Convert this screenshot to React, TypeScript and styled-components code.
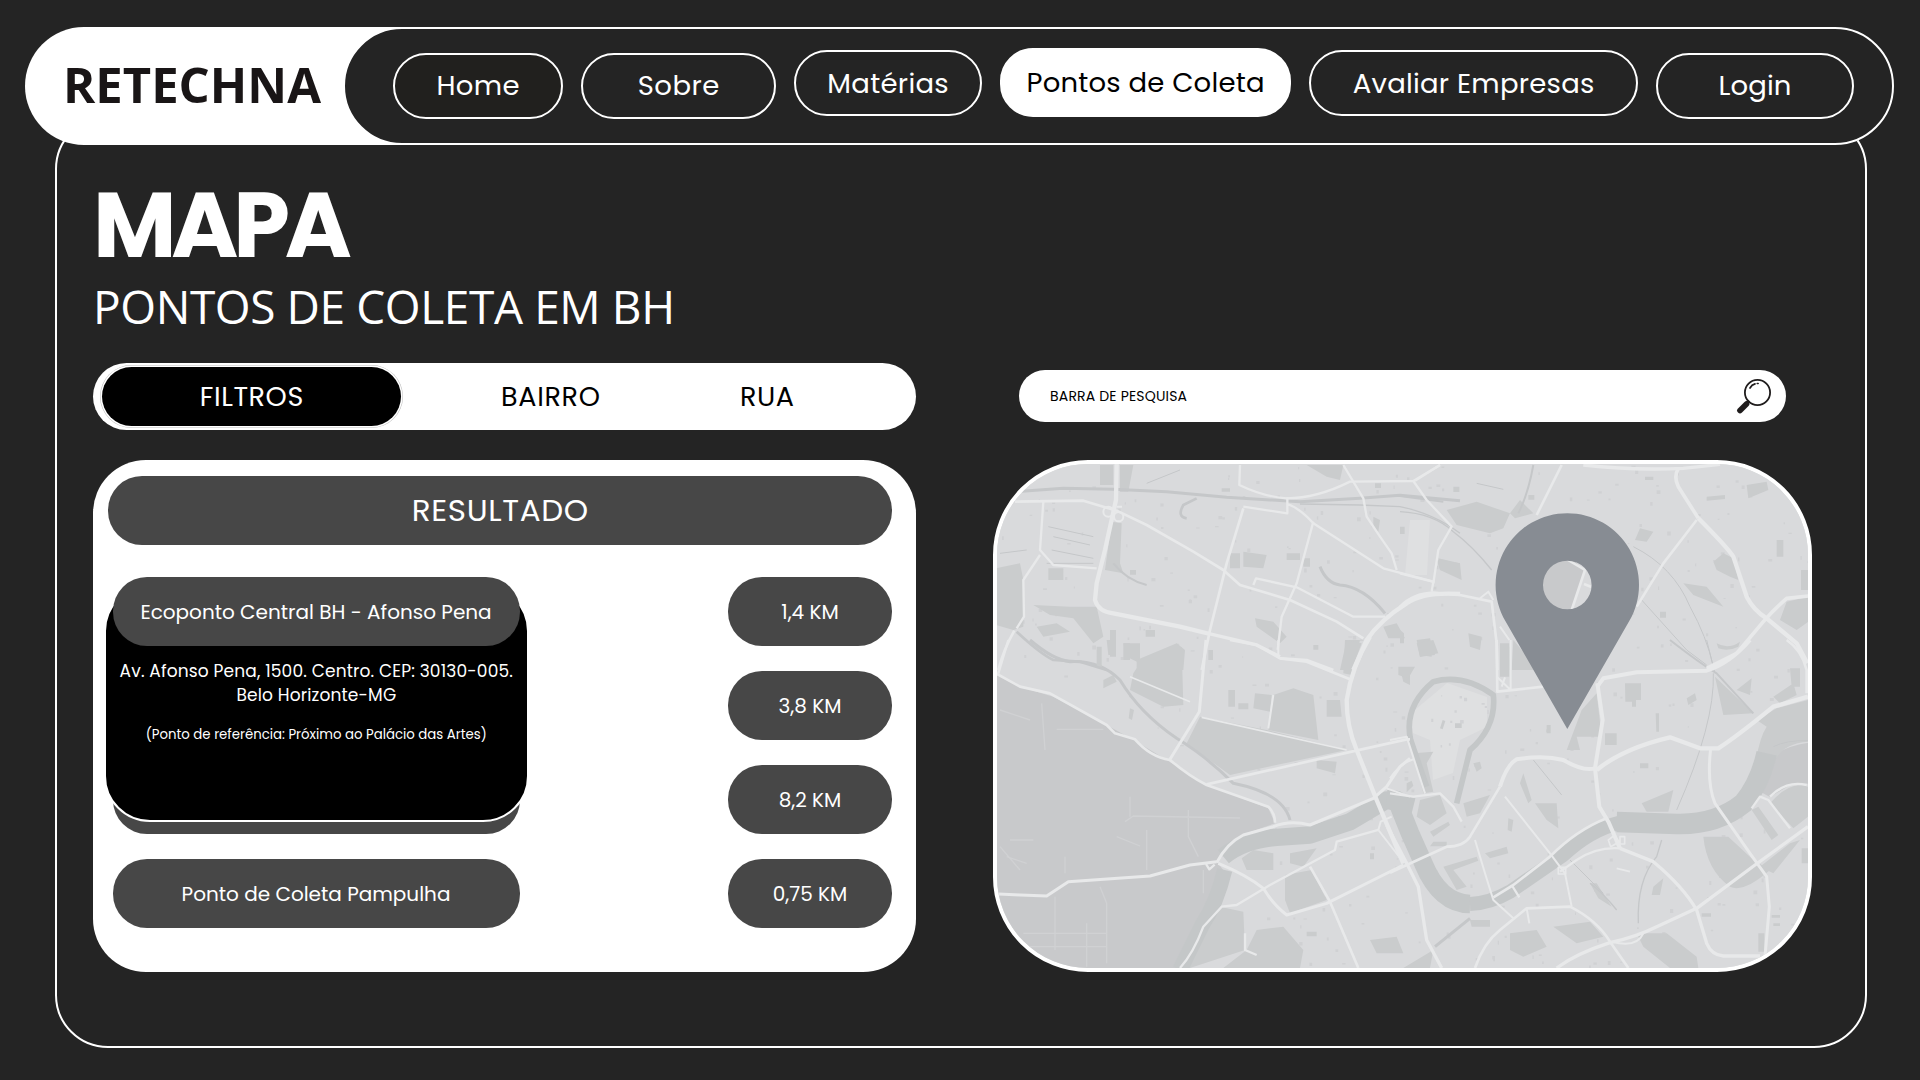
import React from "react";
import styled, { createGlobalStyle, css } from "styled-components";

const GlobalStyle = createGlobalStyle`
  * { box-sizing: border-box; }
  body {
    margin: 0;
    background: #242424;
    color: #fff;
    font-family: Poppins, Inter, "Noto Sans", sans-serif;
    font-feature-settings: "cv11";
  }
`;

const Page = styled.div`
  width: 1920px;
  height: 1080px;
  padding: 27px 26px 0 25px;
  overflow: hidden;
  background: #242424;
`;

const Text = styled.span<{ $size: number; $track?: number }>`
  font-size: ${(p) => p.$size}px;
  letter-spacing: ${(p) => p.$track ?? 0}px;
  margin-right: ${(p) => -(p.$track ?? 0)}px;
  white-space: nowrap;
`;

const Header = styled.header`
  position: relative;
  z-index: 1;
  display: flex;
  height: 117.5px;
  border-radius: 59px;
  background: linear-gradient(90deg, #fff 600px, #242424 600px);
`;

const Brand = styled.div`
  width: 317.5px;
  padding: 0 0 3px 38px;
  display: flex;
  align-items: center;
  color: #191516;
  font-family: "Open Sans", sans-serif;
  font-weight: 700;
`;

const Nav = styled.nav`
  flex: 1;
  display: flex;
  align-items: flex-start;
  gap: 18px;
  padding: 24px 0 0 48.5px;
  border: 2px solid #fff;
  border-radius: 59px;
  background: #242424;
`;

const NavButton = styled.button<{ $width: number; $raise?: number; $active?: boolean; $tint?: string }>`
  width: ${(p) => p.$width}px;
  height: 66px;
  margin: ${(p) => -(p.$raise ?? 0)}px 0 0;
  padding: ${(p) => (p.$raise ? 1.5 : 0)}px 0 0;
  display: flex;
  align-items: center;
  justify-content: center;
  border: 2px solid #fff;
  border-radius: 33px;
  background: ${(p) => p.$tint ?? "transparent"};
  color: #fff;
  font-family: inherit;
  font-feature-settings: inherit;
  ${(p) => p.$active && css`
    height: 68.5px;
    background: #fff;
    color: #000;
  `}
`;

const Frame = styled.main`
  width: 1812px;
  height: 932px;
  margin: -28.5px 0 0 30px;
  padding: 62px 0 0 36px;
  border: 2px solid #fff;
  border-radius: 53px;
`;

const Title = styled.h1`
  margin: 0 0 6px 0;
  line-height: 90px;
  font-weight: 700;
  display: flex;
`;

const Subtitle = styled.h2`
  margin: 0 0 27px 0;
  line-height: 60px;
  font-family: "Open Sans", sans-serif;
  font-weight: 400;
  display: flex;
`;

const Columns = styled.div`
  display: grid;
  grid-template-columns: 823px 819px;
  grid-template-rows: 67px 512px;
  gap: 30px 77px;
`;

const FilterBar = styled.div`
  display: flex;
  align-items: center;
  padding-left: 9px;
  border-radius: 34px;
  background: #fff;
  color: #000;
`;

const FilterActive = styled.div`
  width: 299px;
  height: 59px;
  padding-top: 1px;
  display: flex;
  align-items: center;
  justify-content: center;
  border-radius: 30px;
  background: #000;
  color: #fff;
  box-shadow: 0 0 0 1.5px #fff, 0 0 0 2px #bbb;
`;

const FilterOption = styled.div<{ $gap: number }>`
  margin-left: ${(p) => p.$gap}px;
  padding-top: 1px;
  display: flex;
`;

const SearchBar = styled.div`
  width: 767px;
  height: 52px;
  margin: 7px 0 0 26px;
  padding: 0 15px 0 31px;
  display: flex;
  align-items: center;
  justify-content: space-between;
  border-radius: 26px;
  background: #fff;
  color: #000;
`;

const Card = styled.section`
  padding: 16px 24px 0 15px;
  border-radius: 53px;
  background: #fff;
`;

const CardHeader = styled.div`
  height: 69.3px;
  display: flex;
  align-items: center;
  justify-content: center;
  border-radius: 34px;
  background: #474747;
`;

const Results = styled.div`
  position: relative;
  margin: 31.7px 0 0 4.5px;
  display: flex;
  flex-direction: column;
  gap: 24.7px;
`;

const Row = styled.div`
  display: flex;
  justify-content: space-between;
`;

const Pill = styled.div<{ $width: number; $front?: boolean }>`
  position: relative;
  z-index: ${(p) => (p.$front ? 2 : 0)};
  width: ${(p) => p.$width}px;
  height: 69.3px;
  display: flex;
  align-items: center;
  justify-content: center;
  border-radius: 34px;
  background: #474747;
`;

const Details = styled.div`
  position: absolute;
  z-index: 1;
  left: -8.5px;
  top: 8px;
  width: 424.5px;
  height: 237px;
  padding-top: 72px;
  display: flex;
  flex-direction: column;
  align-items: center;
  line-height: 24px;
  border: 2px solid #fff;
  border-radius: 46px;
  background: #000;
`;

const Reference = styled.div`
  margin-top: 16px;
  display: flex;
`;

const MapCard = styled.section`
  border: 4px solid #fff;
  border-radius: 95px;
  overflow: hidden;
  background: #d9dadc;
  svg { display: block; }
`;

type Line = [width: number, d: string];

interface Tile {
  transform: string;
  water: Line[];
  areas: string;
  tracks: Line[];
  roads: Line[];
}

const WATER = "#c4c7c8";
const PARK = "#c8c9cb";
const BLOCK = "#cacccd";
const ROAD = "#e8e9ea";

const tiles: Tile[] = [
  {
    transform: "translate(990 640) scale(.33333)",
    water: [
      [46, "M704,690 Q680,790 636,856 L570,990"],
      [52, "M700,650 Q760,600 860,592 L960,585 1080,545 1190,480 1270,500"],
    ],
    areas:
      "M440,85 L575,20 580,195 520,200 420,150 430,100Z M630,230 L830,270 1070,330 720,405 590,310Z M850,165 L910,145 970,165 985,300 835,270Z M1065,0 L1110,0 1085,105 1060,100Z M795,160 L845,165 840,215 790,205Z M980,360 L1040,365 1035,400 980,385Z M1010,180h40l5,50h-45z M715,150h20v50h-20z M745,190h30v18h-30z M885,705 L965,690 1010,780 900,820 885,780Z M690,800 L760,815 765,930 600,984 570,984Z M800,870 L880,860 940,930 930,984 700,984 770,930Z M755,655 L790,630 850,640 850,690 770,690Z M900,640 L980,625 940,680 900,670Z M1140,900 L1220,890 1240,940 1160,940Z M1230,85h30v50l-20,-10z M340,120l30,-15 10,20 -40,20z M420,205l12,5 -6,30 -10,-5z M350,0h25v45h-20z M400,10h50v60l-40,-20z M1140,640h12v18h-12z M950,875h30v14h-30z",
    tracks: [[9, "M120,0 Q190,60 240,65 Q330,60 390,120 Q450,220 560,295 Q650,350 730,430 Q880,460 900,540"]],
    roads: [
      [7, "M55,0 L25,100"],
      [8, "M18,100 L90,140 180,160 350,255 375,280 435,298 Q480,350 540,360 Q600,410 650,435 L835,500 Q855,520 855,548"],
      [9, "M648,0 L628,215 540,358"],
      [8, "M650,433 L1085,335 1250,298 1260,298"],
      [5, "M635,232 L1070,330 M420,110 L600,185"],
      [8, "M720,0 L800,15 870,55 950,65 1080,118"],
      [6, "M865,0 V45 M850,165 L835,265"],
      [13, "M1140,-10 Q1085,80 1070,180 Q1070,260 1100,330 L1160,480 1240,670"],
      [9, "M25,762 L170,768 235,725 480,708 600,675 680,665"],
      [9, "M680,668 Q710,610 760,585 L850,560 Q900,540 960,555 L1150,475 1190,440 1230,380 1260,355"],
      [9, "M685,670 Q770,705 820,745 Q850,795 890,825 L1010,790 1240,675"],
      [7, "M570,984 Q610,940 640,860 L695,800 740,795 840,735 1035,630 1040,605 1165,570"],
      [6, "M1165,570 L1172,545 1205,530 M1165,570 L1235,660 M1190,445 L1260,470"],
      [8, "M960,680 L1020,785 1105,984"],
      [7, "M648,672 l10,16 l16,-14 M765,880 V930 L800,945"],
    ],
  },
  {
    transform: "translate(1390 640) scale(.33333)",
    water: [
      [56, "M-10,478 L20,480 60,580 100,670 Q150,790 240,792"],
      [42, "M240,792 Q300,790 360,755 L520,645 Q600,570 690,548"],
      [62, "M680,546 L860,552 Q980,555 1060,490 Q1110,430 1130,340"],
      [17, "M110,440 L62,300 Q40,200 130,125 Q220,100 310,165 Q320,260 240,330 L200,490"],
    ],
    areas:
      "M1098,360 Q1110,290 1130,260 L1100,240 1160,205 1254,180 V305 Q1160,310 1140,400 L1110,430Z M70,340 L130,335 110,370 130,455 100,460Z M150,265l8,-25 8,3 -8,25z M195,250h20v14h-20z M90,480 L150,465 170,520 120,555 80,530Z M220,490 L300,465 270,520 230,530Z M120,575 L175,545 180,555 130,590Z M130,605h40v14h-50z M160,680 L260,650 265,662 190,690 230,740 200,750Z M285,640 L350,620 355,640 300,655Z M435,490 L500,490 505,565 470,540Z M400,400 L425,480 415,490 390,430Z M575,210 L620,160 635,290 560,290 570,330 530,330Z M705,130h48v50h-15v20h-12v-15h-20z M890,175l25,-15 5,20 -25,15z M797,220h10v55h-8z M645,280h35v35h-35z M755,490 L850,450 835,515 770,515Z M750,370h25v15h-25z M975,110 L1090,220 1000,225Z M1040,150 L1085,115 1080,165Z M1150,170 L1210,130 1220,165 1170,190Z M1200,85h30v55h-25z M940,590 L1015,590 1090,660 1140,690 Q1060,760 1020,740 Q950,690 940,590Z M1110,680 L1200,610 1230,600 1150,700Z M1085,510 L1105,500 1165,585 1145,600Z M1140,490 Q1200,420 1254,440 V530 L1210,565Z M360,880 L440,870 470,920 400,950 360,930Z M490,860 L600,845 640,890 560,910Z M740,880 L830,880 920,950 925,984 840,984 760,920Z M40,984 L130,930 120,984Z M240,840h60v20h-55z M790,740 L820,715 810,765 785,765Z M330,20h28v90h-28z M85,10l40,5 v35l-35,-5z M25,80h50l-20,35 -30,-10z M355,535l15,5 -5,35 -12,-5z M250,370l20,-5 5,20 -15,10z M935,820h28v10h-28z M1105,880h18v55h-18z M1145,825h25v8h-25z M1150,850h20v8h-20z M1235,625h20v45h-20z M470,255h12v25h-12z M600,730h20l45,70 -40,-25z M50,430l15,-8 5,15 -20,20z",
    tracks: [
      [9, "M135,920 L240,835"],
      [6, "M840,0 Q930,70 980,100 L1090,220"],
      [4, "M600,730 Q640,760 680,810 M815,600 L800,650 Q740,720 745,850"],
      [3, "M970,100 Q975,250 860,510 M430,360 L515,465 M950,0 L975,100 M540,660 L640,760 M1150,320 Q1190,300 1254,302"],
    ],
    roads: [
      [12, "M1080,0 Q1020,70 950,92 L740,97 640,115 622,140"],
      [12, "M622,130 L638,240 615,385 628,500 655,545 690,625"],
      [6, "M0,300 L50,290 105,460 M0,415 Q30,370 70,358"],
      [8, "M320,0 L322,155 460,140"],
      [6, "M362,0 V150 L322,112 M345,112 L335,140"],
      [12, "M615,385 Q580,395 520,360 Q460,345 380,358 Q350,375 330,440"],
      [8, "M330,440 L240,590 Q220,620 170,620 L50,675 0,698"],
      [13, "M620,390 Q700,325 840,292 L930,325 985,325 Q1040,290 1150,200 L1254,170"],
      [9, "M962,325 Q950,430 975,490 L1080,640 1130,710 1138,800 1125,950"],
      [7, "M0,460 L70,470 150,460 190,500 215,545"],
      [10, "M-10,555 L50,670 85,740 110,900 155,984"],
      [6, "M345,470 L480,640 525,700 545,800"],
      [8, "M650,535 Q560,570 480,650 L370,735 310,772"],
      [7, "M690,625 Q620,620 560,660 L510,695 M365,735 L388,772"],
      [10, "M690,625 L790,665 Q880,740 920,810 L950,910 Q965,945 1000,948 L1110,948"],
      [10, "M500,984 Q560,940 660,908 Q740,890 800,860 L920,805 1095,675 1254,560"],
      [8, "M255,984 Q280,910 330,870 L410,805 540,800 Q620,840 660,905 L715,984"],
      [6, "M255,600 L285,700 310,780 370,835 M410,805 L418,850"],
      [8, "M1190,0 Q1235,30 1250,90 V160"],
      [5, "M655,600 l18,-14 14,20 -25,14z M690,590 h14 v22 h-14z M505,682h22v20h-22z M680,685l40,10"],
      [7, "M1085,505 L1110,470 1135,480 1200,565 M1140,470 Q1190,420 1250,435"],
      [6, "M665,905 Q740,925 760,880"],
    ],
  },
  {
    transform: "translate(980 350) scale(.33333)",
    water: [],
    areas:
      "M48,655 L120,640 130,690 130,830 100,840 48,825Z M160,765 L270,770 350,770 370,860 340,880 280,805 210,795Z M170,830 L230,820 270,845 190,860Z M395,515 L425,520 420,640 430,670 375,660Z M205,655h45v35h-45z M980,345 L1090,345 1080,390 1040,380Z M750,610h30v45h-30z M790,605 L860,615 850,655 790,650Z M825,805 L880,815 920,860 900,880 830,830Z M1100,870 L1145,880 1115,960 1080,960Z M1210,830 L1250,820 1275,865 1225,865Z M1310,870 L1350,865 1365,915 1320,920Z M470,930 L590,880 615,900 610,960 470,960Z M360,345h40v60h-40z M420,345h40l-15,80h-25z M1375,625 L1440,640 V670 L1380,660Z M497,840h28v20h-28z M1180,500l20,10 -5,35 -15,-10z M1260,530h14v22h-14z M920,610h40v20h-40z M970,625h20v25h-20z M1185,400h18v14h-18z M390,840h18v80h-18z M430,880h20v50h-20z M350,890h15v60h-15z M450,660h18v14h-18z M685,900h14v30h-14z M725,415h25v10h-25z M1000,885h15v14h-15z",
    tracks: [
      [9, "M105,425 L250,415 400,418 560,425 740,442 960,455 1140,445 1260,436 1440,452"],
      [4, "M960,462 L1140,465 1260,470 Q1360,490 1440,550"],
      [9, "M1020,650 Q1040,700 1080,705 Q1150,710 1215,790"],
      [8, "M620,505 Q590,500 610,465 L650,445"],
      [8, "M110,845 Q180,910 220,930 L300,935 380,960"],
      [6, "M400,640 Q440,690 500,705"],
      [3, "M205,530 L340,560 M220,560 L330,585 M215,600 L340,625 M200,640 L340,640 M60,610 L140,600 M500,400 L600,360"],
    ],
    roads: [
      [13, "M410,342 L408,450 375,600 350,700 345,750 Q355,785 400,790 L600,830 690,852"],
      [10, "M690,852 L830,885 900,920"],
      [13, "M1440,732 Q1330,725 1280,760 Q1200,810 1160,870 L1120,960"],
      [8, "M105,455 L310,452 410,482 500,525 640,605 730,660 780,705 930,750 1070,815 1150,865"],
      [7, "M190,455 L180,600 220,645 350,655 M180,615 L130,690 132,800 110,835"],
      [8, "M103,842 Q70,900 55,960 M790,475 L740,640 690,840 665,960"],
      [7, "M780,345 L778,405 Q850,440 920,445 Q1010,445 1110,395 L1300,393 1380,345"],
      [7, "M1090,345 L1150,445 1160,500 1200,560 1235,610 1250,660"],
      [7, "M922,442 V490 L790,470 M922,462 Q960,475 1000,520 L1210,655 1360,695 1355,725"],
      [7, "M1300,393 L1340,450 1415,530 1375,600 1360,700"],
      [7, "M1000,515 L950,700 905,800 893,900"],
      [7, "M820,705 L828,685 950,712 1120,800 1215,800"],
      [8, "M900,925 L980,930 1060,960"],
      [6, "M370,485 a15,15 0 1 0 30,0 a15,15 0 1 0 -30,0 M402,500 a14,14 0 1 0 28,0 a14,14 0 1 0 -28,0 M410,470h16"],
    ],
  },
  {
    transform: "translate(1400 350) scale(.33333)",
    water: [],
    areas:
      "M140,480 L230,455 330,490 310,535 270,550 170,525Z M1040,405 L1100,395 1105,420 1045,445Z M720,535 L760,545 740,575 705,570Z M940,635 L970,610 1000,625 1015,690 990,680 950,660Z M850,700 L920,710 970,770 880,735Z M1160,755 L1225,740 1225,815 1190,840 1140,810Z M1203,660h22v60h-22z M110,630 L180,640 185,690 120,660Z M50,880 L100,870 115,910 60,920Z M205,850l40,10 -5,40 -30,-10z M300,880h28v80h-28z M340,870 L390,930 400,960 335,960Z M330,490 L360,450 400,490 345,505Z M160,410h18v16h-18z M920,440l55,-5 v12l-55,5z M1130,570h20v50h-20z M780,785h18v18h-18z M0,840l12,10 v30h-12z M735,380h25v10h-25z M385,435h18v14h-18z M950,880 Q985,900 1020,875 L1015,890 Q985,905 955,895Z",
    tracks: [
      [6, "M0,438 L130,455 M400,345 Q385,430 355,490"],
      [4, "M0,485 Q100,490 160,545 Q220,590 275,660"],
      [3, "M700,590 Q820,650 870,770 Q920,860 940,950 M725,750 L860,900 920,945 M230,400 L310,418"],
    ],
    roads: [
      [7, "M45,392 L120,345 M0,670 L98,695"],
      [8, "M0,770 Q40,730 100,728 L180,735 275,755 290,880 292,960"],
      [6, "M240,745 L265,725 280,750 M300,830 L328,870 M312,960"],
      [8, "M485,345 L410,495"],
      [10, "M550,345 Q700,362 850,355 L960,343"],
      [11, "M835,355 Q820,380 835,410 L895,505"],
      [13, "M895,505 Q980,590 1000,620 L1040,740 Q1060,780 1100,805 L1190,880 1222,940"],
      [8, "M890,510 L790,640 710,770"],
      [11, "M1225,738 L1160,745 Q1120,780 1090,815 L1010,910 920,955"],
    ],
  },
];

const PARKLAND =
  "M18,105 L90,140 190,170 350,255 440,305 530,360 650,435 835,505 855,550 770,580 680,665 700,690 690,800 640,870 570,990 0,990 0,105Z";
const PARK_PATHS =
  "M405,545 L430,528 750,534 M595,510 V590 L625,650 M470,570 V690 M195,770 V930 M290,850 V980 M330,740 L350,790 V970 M100,880 H350 M120,920 H350 M30,210 L120,240 M155,190 L165,330 M200,268 H340 M380,590 L450,618 M420,470 V530 M640,690 V760 M60,600 H130 M225,650 V700 M50,650 L110,670 M30,620 L90,690";

/* Small building footprints scattered over the built-up parts of the city. */
const footprints = (() => {
  let seed = 77;
  const next = () => (seed = (seed * 16807) % 2147483647) / 2147483647;
  let d = "";
  for (let i = 0; i < 520; i++) {
    const x = 997 + next() * 811;
    const y = 464 + next() * 504;
    const w = 1 + next() * 3;
    const h = 1 + next() * 3;
    if (y > 670 + (x - 997) * 0.42 && x < 1260) continue;
    d += `M${x.toFixed(1)},${y.toFixed(1)}h${w.toFixed(1)}v${h.toFixed(1)}h-${w.toFixed(1)}z`;
  }
  return d;
})();

const CityMap = () => (
  <svg width="811" height="504" viewBox="997 464 811 504" fill="none">
    <g strokeLinejoin="round" strokeLinecap="butt" filter="url(#soften)">
      <rect x="980" y="450" width="850" height="540" fill="#d9dadc" />
      <path d="M1410,714 L1447,683 1487,697 1487,727 1460,740 1453,773 1433,780 1430,740 1413,733Z" fill="#dfe0e1" />
      <path d="M1410,520h20l-3,55h-22z" fill="#dfe0e1" />
      <path d={footprints} fill="#ccced0" opacity=".75" />
      <g transform={tiles[0].transform}>
        <path d={PARKLAND} fill={PARK} />
        <path d={PARK_PATHS} stroke="#d0d1d3" strokeWidth="4" />
      </g>
      <path d="M1756,780 Q1766,747 1815,742 V783 L1790,785 1770,797 1757,790Z" fill={PARK} />
      {tiles.map((t) => (
        <g key={t.transform} transform={t.transform}>
          <path d={t.areas} fill={BLOCK} />
          {t.water.map(([w, d]) => <path key={d} d={d} stroke={WATER} strokeWidth={w} />)}
          {t.tracks.map(([w, d]) => <path key={d} d={d} stroke="#c5c7c9" strokeWidth={w} />)}
        </g>
      ))}
      {tiles.map((t) => (
        <g key={t.transform} transform={t.transform} stroke={ROAD}>
          {t.roads.map(([w, d]) => <path key={d} d={d} strokeWidth={w} />)}
        </g>
      ))}
      <path d="M1540,556h55v56h-55z" fill={PARK} />
      <path d="M1595,556 h-25 l15,16 -15,40 h25z" fill="#d9dadc" />
      <path d="M1568,560 L1585,570 1571,612 M1584,584 l10,4" stroke={ROAD} strokeWidth="2.600" />
    </g>
    <path
      fillRule="evenodd"
      fill="#878c93"
      d="M1567.300,729 L1505.200,620.800 A71.700,71.700 0 1 1 1629.400,620.800 Z M1591.600,585 a24.300,24.300 0 1 0 -48.600,0 a24.300,24.300 0 1 0 48.600,0Z"
    />
    <defs>
      <filter id="soften" x="0" y="0" width="1" height="1">
        <feGaussianBlur stdDeviation=".6" />
      </filter>
    </defs>
  </svg>
);

const SearchIcon = () => (
  <svg width="36" height="36" viewBox="0 0 36 36" fill="none" stroke="#1f1c1c">
    <circle cx="22.500" cy="14.500" r="12.600" strokeWidth="1.800" />
    <path d="M14,22.500 L11,26" strokeWidth="3" />
    <path d="M11.500,26 L5,32.500" strokeWidth="5.600" strokeLinecap="round" />
    <path d="M15,10 Q16.800,6.800 20,5.900" strokeWidth="1.700" strokeLinecap="round" />
    <path d="M22.200,5.400 h1" strokeWidth="1.500" strokeLinecap="round" />
  </svg>
);

export default function App() {
  return (
    <Page>
      <GlobalStyle />
      <Header>
        <Brand><Text $size={49}>RETECHNA</Text></Brand>
        <Nav>
          <NavButton $width={170} $tint="#21201e"><Text $size={27.5} $track={0.4}>Home</Text></NavButton>
          <NavButton $width={195}><Text $size={27.5} $track={0.5}>Sobre</Text></NavButton>
          <NavButton $width={188} $raise={3}><Text $size={27.5} $track={0.3}>Matérias</Text></NavButton>
          <NavButton $width={291} $raise={5} $active><Text $size={27.5} $track={0.22}>Pontos de Coleta</Text></NavButton>
          <NavButton $width={329} $raise={3}><Text $size={27.5} $track={0.25}>Avaliar Empresas</Text></NavButton>
          <NavButton $width={198}><Text $size={27.5} $track={0.1}>Login</Text></NavButton>
        </Nav>
      </Header>
      <Frame>
        <Title><Text $size={91} $track={-5.2}>MAPA</Text></Title>
        <Subtitle><Text $size={46} $track={-0.4}>PONTOS DE COLETA EM BH</Text></Subtitle>
        <Columns>
          <FilterBar>
            <FilterActive><Text $size={27} $track={0.6}>FILTROS</Text></FilterActive>
            <FilterOption $gap={100}><Text $size={27} $track={0.7}>BAIRRO</Text></FilterOption>
            <FilterOption $gap={140}><Text $size={27} $track={0.6}>RUA</Text></FilterOption>
          </FilterBar>
          <SearchBar><Text $size={14} $track={0.18}>BARRA DE PESQUISA</Text><SearchIcon /></SearchBar>
          <Card>
            <CardHeader><Text $size={31} $track={0.65}>RESULTADO</Text></CardHeader>
            <Results>
              <Row>
                <Pill $width={407} $front><Text $size={20}>Ecoponto Central BH - Afonso Pena</Text></Pill>
                <Pill $width={164}><Text $size={20}>1,4 KM</Text></Pill>
              </Row>
              <Row>
                <Pill $width={407} />
                <Pill $width={164}><Text $size={20}>3,8 KM</Text></Pill>
              </Row>
              <Row>
                <Pill $width={407} />
                <Pill $width={164}><Text $size={20}>8,2 KM</Text></Pill>
              </Row>
              <Row>
                <Pill $width={407}><Text $size={20}>Ponto de Coleta Pampulha</Text></Pill>
                <Pill $width={164}><Text $size={20}>0,75 KM</Text></Pill>
              </Row>
              <Details>
                <Text $size={17} $track={0.16}>Av. Afonso Pena, 1500. Centro. CEP: 30130-005.</Text>
                <Text $size={17} $track={0.16}>Belo Horizonte-MG</Text>
                <Reference><Text $size={13.3}>(Ponto de referência: Próximo ao Palácio das Artes)</Text></Reference>
              </Details>
            </Results>
          </Card>
          <MapCard><CityMap /></MapCard>
        </Columns>
      </Frame>
    </Page>
  );
}
